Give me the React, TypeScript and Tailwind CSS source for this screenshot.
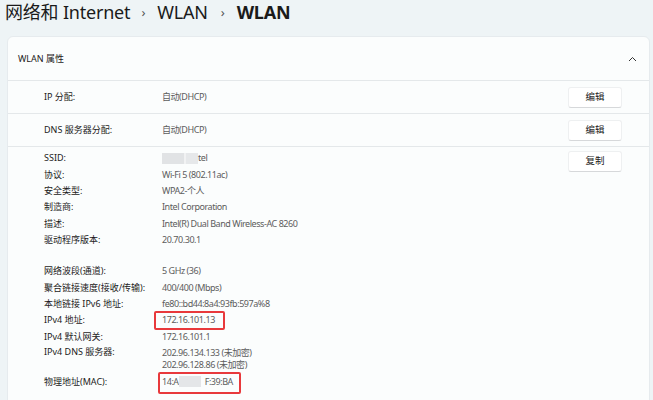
import React from "react";

const font = { fontFamily: '"Noto Sans", "Noto Sans CJK SC", sans-serif' };

function Row({ label, value }: { label: string; value?: React.ReactNode }) {
  return (
    <div className="flex items-center h-[16.3px]">
      <div className="w-[118px] shrink-0 text-[#1b1b1b]">{label}</div>
      <div className="relative h-full flex items-center text-[#5c5c5c] tracking-[-0.45px]">{value}</div>
    </div>
  );
}

function Btn({ text }: { text: string }) {
  return (
    <div className="w-[54px] h-[21px] flex items-center justify-center bg-white rounded-[3px] border border-[#eef0f1] border-b-[#d6d8da] text-[9.5px] text-[#1b1b1b]">
      {text}
    </div>
  );
}

export default function App() {
  return (
    <div className="w-[653px] h-[400px] bg-[#eef4f6] overflow-hidden" style={font}>
      <div className="h-[36px] pl-[5px] flex items-start text-[18px] leading-[24px] tracking-[-0.2px] text-[#1a1a1a]">
        <span>网络和 Internet</span>
        <span className="ml-[11px] mr-[12px] text-[13px] leading-[24px] text-[#555]">›</span>
        <span>WLAN</span>
        <span className="ml-[13px] mr-[12px] text-[13px] leading-[24px] text-[#555]">›</span>
        <span className="font-bold">WLAN</span>
      </div>
      <div className="ml-[7px] mr-[3px] rounded-t-[6px] bg-[#fbfdfd] border border-[#e6ebee] text-[9px]">
        <div className="h-[43px] flex items-center justify-between pl-[10px] pr-[12px] text-[#1b1b1b]">
          <span>WLAN 属性</span>
          <svg width="9" height="6" viewBox="0 0 9 6" fill="none">
            <path d="M1 5 L4.5 1.5 L8 5" stroke="#333" strokeWidth="1" />
          </svg>
        </div>
        <div className="border-t border-[#e4e8ea] h-[33px] flex items-center pl-[36px] pr-[27px]">
          <div className="w-[118px] text-[#1b1b1b]">IP 分配:</div>
          <div className="flex-1 text-[#5c5c5c] tracking-[-0.45px]">自动(DHCP)</div>
          <Btn text="编辑" />
        </div>
        <div className="border-t border-[#e4e8ea] h-[33px] flex items-center pl-[36px] pr-[27px]">
          <div className="w-[118px] text-[#1b1b1b]">DNS 服务器分配:</div>
          <div className="flex-1 text-[#5c5c5c] tracking-[-0.45px]">自动(DHCP)</div>
          <Btn text="编辑" />
        </div>
        <div className="border-t border-[#e4e8ea] pl-[36px] pr-[27px] pt-[3px] pb-[20px] relative">
          <div className="absolute right-[27px] top-[4px]">
            <Btn text="复制" />
          </div>
          <Row
            label="SSID:"
            value={
              <span className="flex items-center">
                <span className="inline-block w-[22px] h-[11px] bg-[#e1e3e5]" />
                <span className="inline-block w-[2px] h-[11px] bg-[#f1f2f3]" />
                <span className="inline-block w-[12px] h-[11px] bg-[#e6e8ea]" />
                <span>tel</span>
              </span>
            }
          />
          <Row label="协议:" value="Wi-Fi 5 (802.11ac)" />
          <Row label="安全类型:" value="WPA2-个人" />
          <Row label="制造商:" value="Intel Corporation" />
          <Row label="描述:" value="Intel(R) Dual Band Wireless-AC 8260" />
          <Row label="驱动程序版本:" value="20.70.30.1" />
          <div className="h-[15.2px]" />
          <Row label="网络波段(通道):" value="5 GHz (36)" />
          <Row label="聚合链接速度(接收/传输):" value="400/400 (Mbps)" />
          <Row label="本地链接 IPv6 地址:" value="fe80::bd44:8a4:93fb:597a%8" />
          <Row
            label="IPv4 地址:"
            value={
              <>
                <span>172.16.101.13</span>
                <span className="absolute left-[-8px] top-[-1px] w-[71px] h-[19px] border-[2.5px] border-[#e8393c] rounded-[2px]" />
              </>
            }
          />
          <Row label="IPv4 默认网关:" value="172.16.101.1" />
          <div className="flex h-[29px]">
            <div className="w-[118px] shrink-0 text-[#1b1b1b] leading-[16.3px]">IPv4 DNS 服务器:</div>
            <div className="text-[#5c5c5c] leading-[12px] pt-[3px] tracking-[-0.45px]">
              <div>202.96.134.133 (未加密)</div>
              <div>202.96.128.86 (未加密)</div>
            </div>
          </div>
          <div className="flex items-center h-[16px]">
            <div className="w-[118px] shrink-0 text-[#1b1b1b]">物理地址(MAC):</div>
            <div className="text-[#5c5c5c] relative h-full flex items-center tracking-[-0.45px]">
              <span>14:A</span>
              <span className="inline-block w-[22px] h-[11px] bg-[#e4e6e8]" />
              <span className="inline-block w-[4px]" />
              <span>F:39:BA</span>
              <span className="absolute left-[-4px] top-[-1px] w-[83px] h-[22px] border-[2.5px] border-[#e8393c] rounded-[2px]" />
            </div>
          </div>
        </div>
      </div>
    </div>
  );
}
